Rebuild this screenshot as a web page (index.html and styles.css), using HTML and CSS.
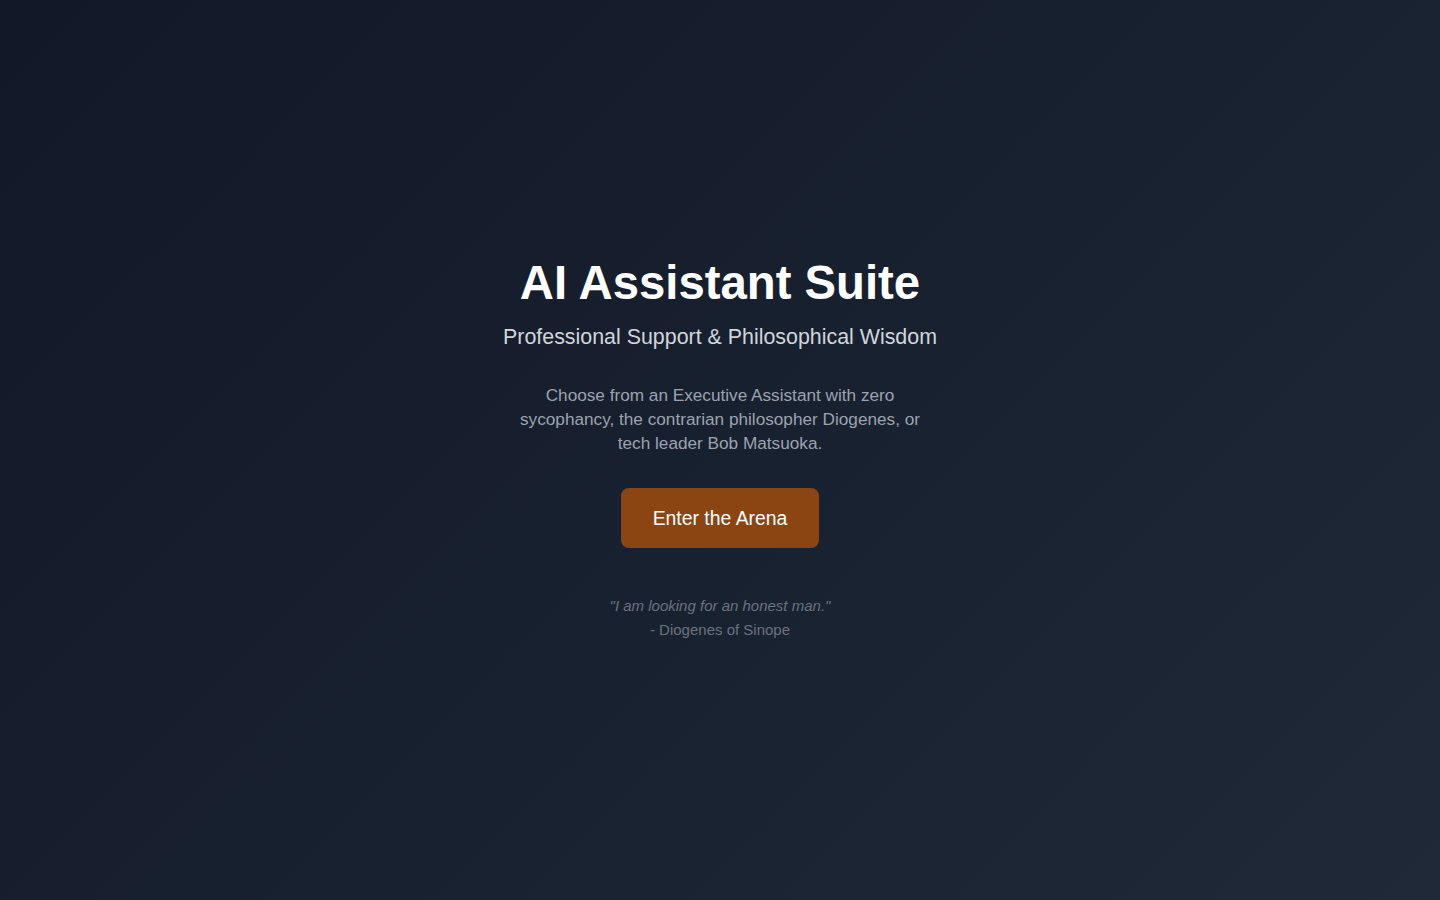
FILE: index.html
```html
<!DOCTYPE html>
<html lang="en">
<head>
<meta charset="utf-8">
<title>AI Assistant Suite</title>
<link rel="stylesheet" href="styles.css">
</head>
<body>
<main class="hero">
  <div class="content">
    <h1 class="title">AI Assistant Suite</h1>
    <p class="subtitle">Professional Support &amp; Philosophical Wisdom</p>
    <p class="description">Choose from an Executive Assistant with zero sycophancy, the contrarian philosopher Diogenes, or tech leader Bob Matsuoka.</p>
    <button class="cta">Enter the Arena</button>
    <div class="quote">
      <p class="quote-text">"I am looking for an honest man."</p>
      <p class="quote-author">- Diogenes of Sinope</p>
    </div>
  </div>
</main>
</body>
</html>
```

FILE: styles.css
```css
* { box-sizing: border-box; }
html, body { margin: 0; padding: 0; }
body {
  font-family: "Liberation Sans", Arial, Helvetica, sans-serif;
  background: linear-gradient(135deg, #111827 0%, #1f2937 100%);
  min-height: 100vh;
  color: #fff;
}
.hero {
  min-height: 100vh;
  display: flex;
  align-items: center;
  justify-content: center;
}
.content {
  display: flex;
  flex-direction: column;
  align-items: center;
  text-align: center;
  padding-bottom: 2px;
}
.title {
  margin: 0 0 16px;
  font-size: 47.3px;
  line-height: 48px;
  font-weight: 700;
  color: #ffffff;
}
.subtitle {
  margin: 0 0 32px;
  font-size: 21.4px;
  line-height: 28px;
  color: #d1d5db;
}
.description {
  margin: 0 0 33px;
  max-width: 416px;
  font-size: 17.2px;
  line-height: 24px;
  color: #9ca3af;
}
.cta {
  font-family: inherit;
  background: #8b4513;
  color: #ffffff;
  border: none;
  border-radius: 8px;
  width: 198px;
  padding: 16px 0;
  font-size: 19.4px;
  line-height: 28px;
  cursor: pointer;
}
.quote {
  margin-top: 48px;
}
.quote-text {
  margin: 0 0 4px;
  font-size: 15px;
  line-height: 20px;
  font-style: italic;
  color: #6b7280;
}
.quote-author {
  margin: 0;
  font-size: 15px;
  line-height: 20px;
  color: #6b7280;
}
```
